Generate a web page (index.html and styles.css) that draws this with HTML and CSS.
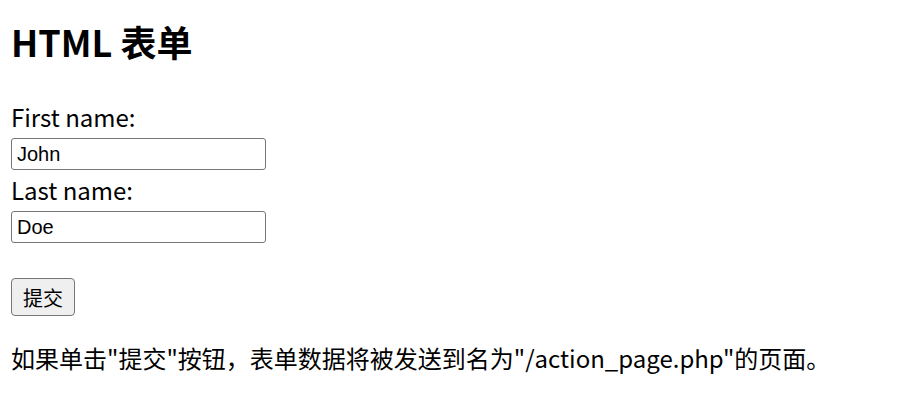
FILE: index.html
```html
<!DOCTYPE html>
<html>
	<head>
		<meta charset="UTF-8">
		<title>HTML 表单</title>
		<link rel="stylesheet" href="styles.css">
	</head>
	<body>
		<div class="page">
			<h1 class="title">HTML 表单</h1>
			<form class="form" action="/action_page.php">
				<label class="label" for="fname">First name:</label>
				<input class="field" type="text" id="fname" name="firstname" value="John">
				<label class="label" for="lname">Last name:</label>
				<input class="field field-last" type="text" id="lname" name="lastname" value="Doe">
				<input class="submit" type="submit" value="提交">
			</form>
			<p class="note">如果单击"提交"按钮，表单数据将被发送到名为"/action_page.php"的页面。</p>
		</div>
	</body>
</html>
```

FILE: styles.css
```css
*{
	margin: 0;
	padding: 0;
	box-sizing: border-box;
}
body{
	background: #fff;
	color: #000;
	font-family: "Noto Sans CJK SC", sans-serif;
}
.page{
	padding: 15px 11px;
}
.title{
	font-size: 36px;
	line-height: 52px;
	font-weight: bold;
	margin-bottom: 32px;
}
.form{
	display: flex;
	flex-direction: column;
	align-items: flex-start;
}
.label{
	font-size: 24px;
	line-height: 35px;
}
.field{
	width: 255px;
	height: 32px;
	margin: 4px 0 2px;
	padding: 1px 5px;
	border: 1px solid #767676;
	border-radius: 3px;
	font-family: "Liberation Sans", Arial, "Noto Sans CJK SC", sans-serif;
	font-size: 20px;
	color: #000;
	background: #fff;
}
.field-last{
	margin-top: 4px;
}
.submit{
	margin-top: 33px;
	width: 64px;
	height: 38px;
	border: 1px solid #767676;
	border-radius: 4px;
	background: #efefef;
	font-family: "Liberation Sans", Arial, "Noto Sans CJK SC", sans-serif;
	font-size: 20px;
	color: #000;
}
.note{
	margin-top: 24px;
	font-size: 24px;
	line-height: 35px;
}
```
